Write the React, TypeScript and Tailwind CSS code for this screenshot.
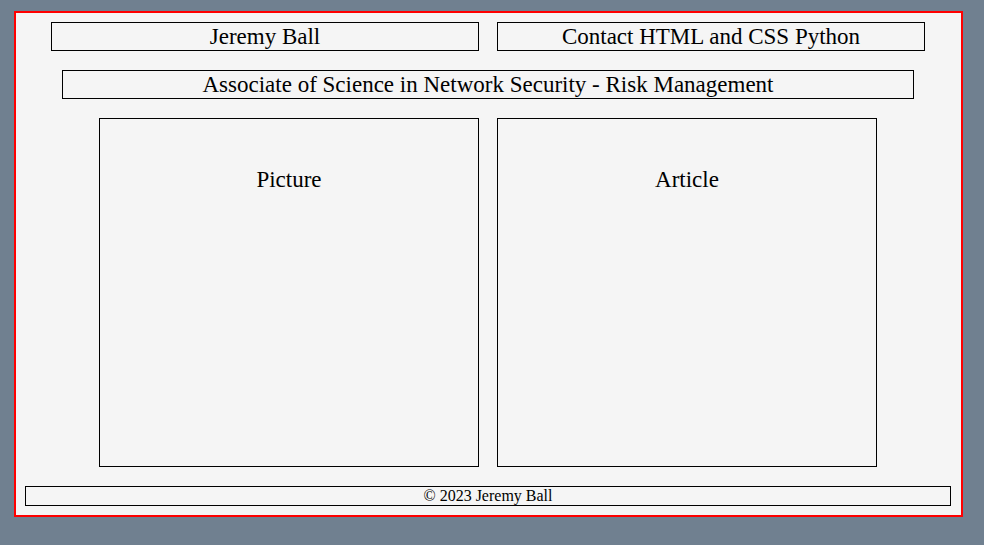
import React from 'react';

const serif = { fontFamily: '"Liberation Serif", "DejaVu Serif", serif' };

const Box = ({ className = '', children }: { className?: string; children?: React.ReactNode }) => (
    <div className={`border border-black flex items-center justify-center ${className}`}>{children}</div>
);

const App: React.FC = () => {
    return (
        <div className="min-h-screen w-full bg-[#708090] pt-[11px] pl-[14px] text-black" style={serif}>
            {/* Page frame */}
            <div className="w-[949px] h-[506px] border-2 border-[#ff0000] bg-[#f5f5f5] flex flex-col items-start pt-[9px] gap-[19px]">
                {/* Header */}
                <div className="flex gap-[18px] ml-[35px]">
                    <Box className="w-[428px] h-[29px] text-[23px] leading-none">Jeremy Ball</Box>
                    <Box className="w-[428px] h-[29px] text-[23px] leading-none">Contact HTML and CSS Python</Box>
                </div>

                {/* Degree */}
                <Box className="w-[852px] h-[29px] text-[23px] leading-none ml-[46px]">
                    Associate of Science in Network Security - Risk Management
                </Box>

                {/* Content */}
                <div className="flex gap-[18px] ml-[83px]">
                    <div className="w-[380px] h-[349px] border border-black flex justify-center pt-[49px]">
                        <h2 className="text-[23px] leading-none h-fit">Picture</h2>
                    </div>
                    <div className="w-[380px] h-[349px] border border-black flex justify-center pt-[49px]">
                        <h2 className="text-[23px] leading-none h-fit">Article</h2>
                    </div>
                </div>

                {/* Footer */}
                <Box className="w-[926px] h-[20px] text-[16px] leading-none ml-[9px]">© 2023 Jeremy Ball</Box>
            </div>
        </div>
    );
};

export default App;
